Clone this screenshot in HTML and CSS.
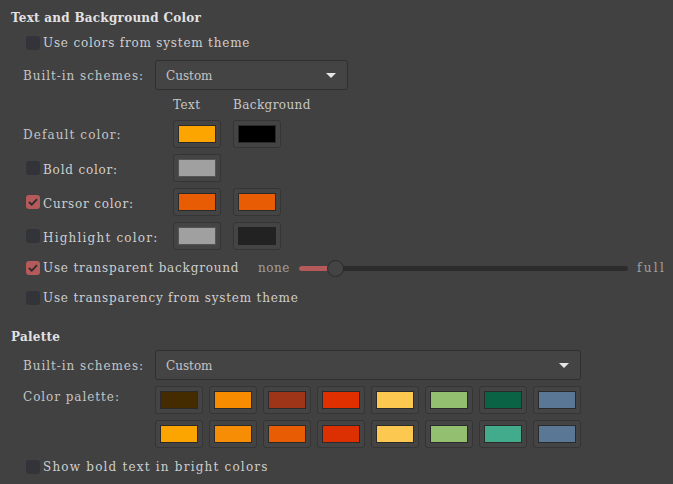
FILE: index.html

```html
<!DOCTYPE html>
<html lang="en">
<head>
    <meta charset="UTF-8">
    <title>Text and Background Color</title>
    <link rel="stylesheet" href="styles.css">
</head>
<body>
    <h2 class="title">Text and Background Color</h2>
    <div class="check check-first"><span class="box"></span>Use colors from system theme</div>

    <div class="scheme scheme-top">
        <span class="label">Built-in schemes:</span>
        <div class="combo combo-small">Custom<span class="arrow"></span></div>
    </div>

    <div class="colors">
        <span></span>
        <span class="head">Text</span>
        <span class="head">Background</span>

        <span class="label label-wide">Default color:</span>
        <button class="btn"><i class="swatch" style="background: #fca400"></i></button>
        <button class="btn"><i class="swatch" style="background: #000000"></i></button>

        <span class="check"><span class="box"></span>Bold color:</span>
        <button class="btn"><i class="swatch swatch-off" style="background: #a0a0a0"></i></button>
        <span></span>

        <span class="check"><span class="box on"><svg width="10" height="8" viewBox="0 0 10 8"><path d="M1 4l2.7 2.7L9 1.2" fill="none" stroke="#2e2e2e" stroke-width="1.8"/></svg></span>Cursor color:</span>
        <button class="btn"><i class="swatch" style="background: #e85d04"></i></button>
        <button class="btn"><i class="swatch" style="background: #e85d04"></i></button>

        <span class="check check-wide"><span class="box"></span>Highlight color:</span>
        <button class="btn"><i class="swatch swatch-off" style="background: #a0a0a0"></i></button>
        <button class="btn"><i class="swatch swatch-flat" style="background: #222222"></i></button>
    </div>

    <div class="check check-slider">
        <span class="box on"><svg width="10" height="8" viewBox="0 0 10 8"><path d="M1 4l2.7 2.7L9 1.2" fill="none" stroke="#2e2e2e" stroke-width="1.8"/></svg></span>
        <span class="slider-label">Use transparent background</span>
        <span class="dim dim-none">none</span>
        <div class="slider"><span class="fill"></span><span class="thumb"></span></div>
        <span class="dim dim-full">full</span>
    </div>
    <div class="check check-last"><span class="box"></span>Use transparency from system theme</div>

    <h2 class="title title-palette">Palette</h2>

    <div class="scheme scheme-palette">
        <span class="label">Built-in schemes:</span>
        <div class="combo combo-wide">Custom<span class="arrow"></span></div>
    </div>

    <div class="palette-row">
        <span class="label label-palette">Color palette:</span>
        <div class="palette">
            <button class="btn"><i class="swatch" style="background: #452c00"></i></button>
            <button class="btn"><i class="swatch" style="background: #f78c00"></i></button>
            <button class="btn"><i class="swatch" style="background: #9e3519"></i></button>
            <button class="btn"><i class="swatch" style="background: #e03000"></i></button>
            <button class="btn"><i class="swatch" style="background: #fcc850"></i></button>
            <button class="btn"><i class="swatch" style="background: #93c070"></i></button>
            <button class="btn"><i class="swatch" style="background: #0a6345"></i></button>
            <button class="btn"><i class="swatch" style="background: #5a7896"></i></button>
            <button class="btn"><i class="swatch" style="background: #fca400"></i></button>
            <button class="btn"><i class="swatch" style="background: #f78c05"></i></button>
            <button class="btn"><i class="swatch" style="background: #e85d04"></i></button>
            <button class="btn"><i class="swatch" style="background: #dc2f02"></i></button>
            <button class="btn"><i class="swatch" style="background: #fcc850"></i></button>
            <button class="btn"><i class="swatch" style="background: #93c070"></i></button>
            <button class="btn"><i class="swatch" style="background: #42ab8c"></i></button>
            <button class="btn"><i class="swatch" style="background: #5a7896"></i></button>
        </div>
    </div>

    <div class="check check-bright"><span class="box"></span>Show bold text in bright colors</div>
</body>
</html>
```

FILE: styles.css

```css
html, body {
    height: 100%;
}
body {
    margin: 0;
    padding: 0 0 0 11px;
    box-sizing: border-box;
    overflow: hidden;
    background-color: #414141;
    color: #cfcfcf;
    font-family: "DejaVu Serif", serif;
    font-size: 12px;
    line-height: 14px;
    letter-spacing: 0.8px;
}
.title {
    margin: 0;
    padding-top: 11px;
    color: #e2e2e2;
    font-size: 12px;
    font-weight: bold;
    letter-spacing: 0.25px;
}
.title-palette {
    padding-top: 0;
    margin-top: 25px;
}
.check {
    display: flex;
    align-items: center;
    height: 14px;
    margin-left: 15px;
    white-space: nowrap;
}
.check-first {
    margin-top: 11px;
}
.check-slider {
    margin-top: 11px;
}
.check-last {
    margin-top: 16px;
}
.check-bright {
    margin-top: 12px;
    letter-spacing: 1.2px;
}
.check-wide {
    letter-spacing: 1.2px;
}
.box {
    display: flex;
    align-items: center;
    justify-content: center;
    flex: none;
    width: 14px;
    height: 14px;
    margin-right: 3px;
    border-radius: 3px;
    background-color: #33333a;
}
.box.on {
    background-color: #b45a5a;
}
.label {
    color: #c4c4c4;
    letter-spacing: 0.95px;
}
.label-wide {
    letter-spacing: 1.1px;
}
.colors .label {
    padding-top: 2px;
}
.colors .check {
    height: 18px;
    padding-top: 4px;
}
.scheme {
    display: flex;
    align-items: center;
    margin-left: 12px;
}
.scheme .label {
    width: 132px;
    padding-top: 2px;
}
.scheme-top {
    margin-top: 10px;
}
.scheme-palette {
    margin-top: 6px;
}
.combo {
    position: relative;
    box-sizing: border-box;
    height: 30px;
    padding-left: 10px;
    line-height: 30px;
    border: 1px solid #2f2f2f;
    border-radius: 3px;
    background-color: #444444;
    color: #c4c4c4;
    letter-spacing: 0;
}
.combo-small {
    width: 193px;
}
.combo-wide {
    width: 426px;
}
.arrow {
    position: absolute;
    top: 12px;
    right: 11px;
    width: 0;
    height: 0;
    border-left: 5px solid transparent;
    border-right: 5px solid transparent;
    border-top: 5px solid #e6e6e6;
}
.colors {
    display: grid;
    grid-template-columns: 138px 48px 48px;
    grid-template-rows: 24px;
    grid-auto-rows: 28px;
    column-gap: 12px;
    row-gap: 6px;
    align-items: center;
    margin: 0 0 0 12px;
}
.colors .check {
    margin-left: 3px;
}
.colors .check .box {
    margin-top: -4px;
}
.head {
    padding-top: 6px;
    color: #c8c8c8;
    white-space: nowrap;
    letter-spacing: 0.4px;
}
.btn {
    display: block;
    box-sizing: border-box;
    width: 48px;
    height: 28px;
    padding: 4px;
    border: 1px solid #353535;
    border-radius: 3px;
    background-color: #444444;
}
.swatch {
    display: block;
    box-sizing: border-box;
    height: 18px;
    border: 1px solid #2a2a2a;
}
.swatch-off {
    border-color: #555555;
}
.swatch-flat {
    border-color: #222222;
}
.slider-label {
    width: 215px;
}
.dim {
    color: #a0a0a0;
}
.dim-none {
    width: 41px;
    letter-spacing: 0.5px;
}
.dim-full {
    letter-spacing: 2.3px;
}
.slider {
    position: relative;
    flex: none;
    width: 329px;
    height: 5px;
    margin-right: 9px;
    border-radius: 3px;
    background-color: #2c2c2c;
}
.fill {
    position: absolute;
    left: 0;
    top: 0;
    width: 30px;
    height: 5px;
    border-radius: 3px 0 0 3px;
    background-color: #b45a5a;
}
.thumb {
    position: absolute;
    left: 28px;
    top: -6px;
    box-sizing: border-box;
    width: 17px;
    height: 17px;
    border: 1px solid #2a2a2a;
    border-radius: 50%;
    background-color: #444444;
}
.palette-row {
    display: flex;
    margin: 6px 0 0 12px;
}
.label-palette {
    width: 132px;
    padding-top: 4px;
}
.palette {
    display: grid;
    grid-template-columns: repeat(8, 48px);
    grid-auto-rows: 28px;
    gap: 6px;
}
```
